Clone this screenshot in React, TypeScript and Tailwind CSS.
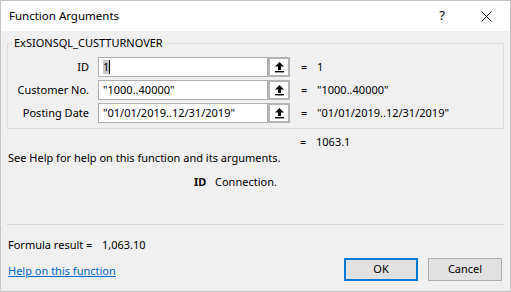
import React from 'react'

const font = { fontFamily: '"Noto Sans", "Liberation Sans", sans-serif' }

function RefButton() {
    return (
        <div className="w-[22px] h-[20px] border-2 border-[#b4b4b4] bg-white flex items-center justify-center">
            <svg width="11" height="12" viewBox="0 0 11 12">
                <path d="M5.5 1 L10 5.5 L7 5.5 L7 9 L4 9 L4 5.5 L1 5.5 Z" fill="#000" />
                <rect x="1" y="10" width="9" height="1.4" fill="#000" />
            </svg>
        </div>
    )
}

function ArgRow({ label, value, result, selected }: { label: string; value: string; result: string; selected?: boolean }) {
    return (
        <div className="flex items-center h-[20px]">
            <div className="w-[82px] text-right pr-[1px]">{label}</div>
            <div className="ml-[8px] w-[170px] h-[20px] border border-[#adadad] bg-white flex items-center pl-[4px]">
                {selected ? (
                    <>
                        <span className="bg-[#c8c8c8] leading-[14px]">{value}</span>
                        <span className="w-px h-[14px] bg-black" />
                    </>
                ) : (
                    <span>{value}</span>
                )}
            </div>
            <RefButton />
            <div className="ml-[11px] w-[16px]">=</div>
            <div>{result}</div>
        </div>
    )
}

export default function App() {
    return (
        <div className="w-[511px] h-[292px] border border-[#c4c4c4] flex flex-col text-[11px] text-black bg-[#f0f0f0]" style={font}>
            {/* Titelleiste */}
            <div className="h-[30px] bg-white flex items-center pl-[8px] shrink-0">
                <span className="flex-1 text-[11.5px]">Function Arguments</span>
                <span className="w-[14px] text-center mr-[32px] text-[13px]">?</span>
                <svg width="11" height="11" viewBox="0 0 11 11" className="mr-[18px]">
                    <path d="M0.5 0.5 L10.5 10.5 M10.5 0.5 L0.5 10.5" stroke="#000" strokeWidth="1" />
                </svg>
            </div>

            {/* Gruppe */}
            <fieldset className="mx-[6px] mt-[4px] border border-[#dcdcdc] pb-[5px]">
                <legend className="ml-[4px] px-[2px] leading-[16px]">ExSIONSQL_CUSTTURNOVER</legend>
                <div className="flex flex-col gap-[3px] mt-[6px]">
                    <ArgRow label="ID" value="1" result="1" selected />
                    <ArgRow label="Customer No." value={'"1000..40000"'} result={'"1000..40000"'} />
                    <ArgRow label="Posting Date" value={'"01/01/2019..12/31/2019"'} result={'"01/01/2019..12/31/2019"'} />
                </div>
            </fieldset>

            <div className="flex mt-[5px] h-[16px] items-center">
                <div className="ml-[299px] w-[16px]">=</div>
                <div>1063.1</div>
            </div>
            <div className="pl-[7px] h-[16px] flex items-center">See Help for help on this function and its arguments.</div>
            <div className="flex h-[16px] mt-[8px] items-center">
                <span className="ml-[193px] font-bold w-[21px]">ID</span>
                <span>Connection.</span>
            </div>

            <div className="mx-[6px] mt-[34px] h-px bg-[#d7d7d7]" />

            <div className="pl-[7px] mt-[12px] h-[16px] flex items-center">
                <span className="w-[94px]">Formula result =</span>
                <span>1,063.10</span>
            </div>

            <div className="flex items-center mt-[5px] pl-[7px] pr-[8px]">
                <span className="flex-1 text-[#0066cc] underline mt-[3px]">Help on this function</span>
                <button className="w-[74px] h-[23px] border-2 border-[#0078d7] bg-[#e1e1e1]">OK</button>
                <button className="ml-[10px] w-[74px] h-[23px] border border-[#adadad] bg-[#e1e1e1]">Cancel</button>
            </div>
        </div>
    )
}
